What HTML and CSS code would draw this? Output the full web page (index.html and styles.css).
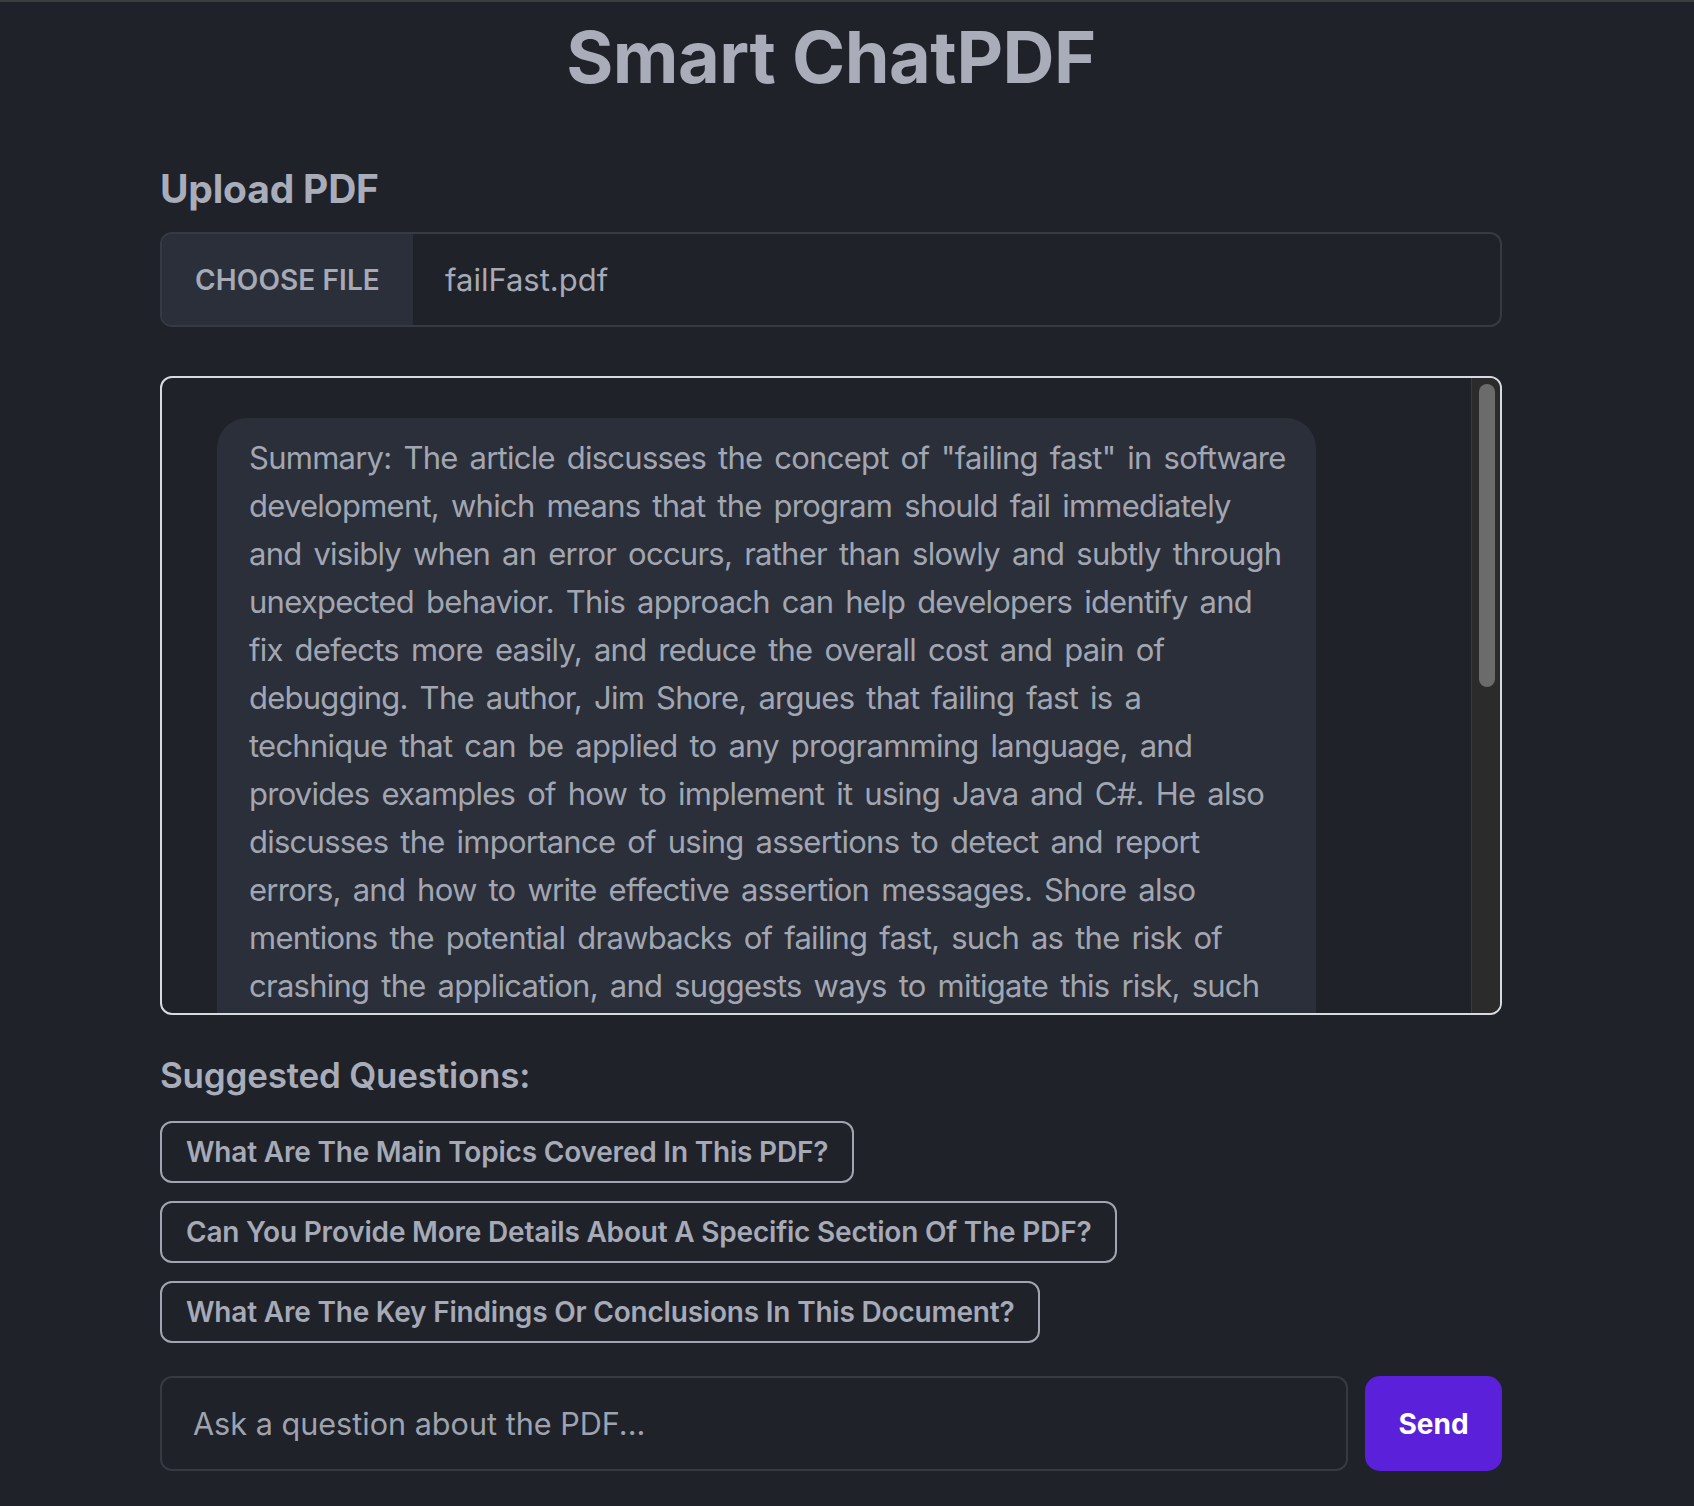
FILE: index.html
```html
<!DOCTYPE html>
<html lang="en">
<head>
<meta charset="utf-8">
<title>Smart ChatPDF</title>
<link rel="stylesheet" href="styles.css">
</head>
<body>
<div class="topbar"></div>
<main class="page">
  <h1 class="title">Smart ChatPDF</h1>

  <section class="upload">
    <h2 class="upload-label">Upload PDF</h2>
    <div class="file-field">
      <button class="file-btn" type="button">CHOOSE FILE</button>
      <span class="file-name">failFast.pdf</span>
    </div>
  </section>

  <section class="chat">
    <div class="chat-scroll">
      <div class="message bot">Summary: The article discusses the concept of "failing fast" in software development, which means that the program should fail immediately and visibly when an error occurs, rather than slowly and subtly through unexpected behavior. This approach can help developers identify and fix defects more easily, and reduce the overall cost and pain of debugging. The author, Jim Shore, argues that failing fast is a technique that can be applied to any programming language, and provides examples of how to implement it using Java and C#. He also discusses the importance of using assertions to detect and report errors, and how to write effective assertion messages. Shore also mentions the potential drawbacks of failing fast, such as the risk of crashing the application, and suggests ways to mitigate this risk, such as using a global exception handler that logs the error and lets the user recover gracefully.</div>
    </div>
    <div class="scrollbar" aria-hidden="true">
      <div class="scrollbar-thumb"></div>
    </div>
  </section>

  <section class="suggestions">
    <h3 class="suggestions-title">Suggested Questions:</h3>
    <div class="suggestion-list">
      <button class="suggestion" type="button">What Are The Main Topics Covered In This PDF?</button>
      <button class="suggestion" type="button">Can You Provide More Details About A Specific Section Of The PDF?</button>
      <button class="suggestion" type="button">What Are The Key Findings Or Conclusions In This Document?</button>
    </div>
  </section>

  <form class="ask">
    <input class="ask-input" type="text" placeholder="Ask a question about the PDF...">
    <button class="send" type="button">Send</button>
  </form>
</main>
</body>
</html>
```

FILE: styles.css
```css
* {
  box-sizing: border-box;
}

html, body {
  margin: 0;
  padding: 0;
  background: #1f2229;
}

body {
  font-family: "Inter", "Noto Sans", sans-serif;
  color: #a6a9b6;
  min-height: 1506px;
}

.topbar {
  height: 2px;
  background: #3c3d40;
}

.page {
  width: 1342px;
  margin-left: 160px;
  display: flex;
  flex-direction: column;
}

.title {
  margin: 19px 0 0;
  font-size: 72px;
  line-height: 72px;
  font-weight: 700;
  letter-spacing: -0.5px;
  text-align: center;
  color: #a9acb9;
}

.upload {
  margin-top: 73px;
}

.upload-label {
  margin: 0;
  font-size: 39px;
  line-height: 46px;
  font-weight: 700;
  letter-spacing: -0.2px;
  color: #a9acb9;
}

.file-field {
  margin-top: 20px;
  height: 95px;
  border: 2px solid #363a43;
  border-radius: 12px;
  display: flex;
  align-items: stretch;
  overflow: hidden;
}

.file-btn {
  width: 251px;
  border: none;
  margin: 0;
  padding: 0;
  background: #2a2f39;
  color: #a6a9b6;
  font-family: inherit;
  font-size: 28px;
  font-weight: 600;
  letter-spacing: 0.1px;
}

.file-name {
  display: flex;
  align-items: center;
  padding-left: 32px;
  font-size: 31px;
  color: #a6a9b6;
}

.chat {
  margin-top: 49px;
  height: 639px;
  border: 2px solid #d9dadf;
  border-radius: 12px;
  display: flex;
  overflow: hidden;
}

.chat-scroll {
  flex: 1;
  padding: 40px 0 40px 55px;
  overflow: hidden;
}

.scrollbar {
  width: 29px;
  flex: none;
  background: #2b2b2b;
  border-left: 1px solid #3b3b3b;
  padding: 6px 5px 0 7px;
}

.scrollbar-thumb {
  height: 303px;
  border-radius: 8px;
  background: #6b6b6b;
}

.message {
  width: 1099px;
  padding: 16px 27px 16px 32px;
  border-radius: 30px;
  background: #2a2f39;
  color: #a2a6b2;
  font-size: 31px;
  line-height: 48px;
  letter-spacing: -0.75px;
  word-spacing: 4px;
}

.suggestions {
  margin-top: 39px;
}

.suggestions-title {
  margin: 0;
  font-size: 35px;
  line-height: 43px;
  font-weight: 600;
  letter-spacing: -0.2px;
  color: #a9acb9;
}

.suggestion-list {
  margin-top: 24px;
  display: flex;
  flex-direction: column;
  align-items: flex-start;
  gap: 18px;
}

.suggestion {
  height: 62px;
  padding: 0 24px;
  border: 2px solid #a2a5b0;
  border-radius: 12px;
  background: transparent;
  color: #a6a9b6;
  font-family: inherit;
  font-size: 28px;
  font-weight: 600;
  letter-spacing: -0.2px;
}

.ask {
  margin: 33px 0 0;
  display: flex;
  gap: 17px;
}

.ask-input {
  flex: 1;
  height: 95px;
  padding: 0 31px;
  border: 2px solid #363a43;
  border-radius: 12px;
  background: transparent;
  color: #a6a9b6;
  font-family: inherit;
  font-size: 30.6px;
  outline: none;
}

.ask-input::placeholder {
  color: #9fa3af;
}

.send {
  width: 137px;
  height: 95px;
  border: none;
  border-radius: 15px;
  background: #5b20da;
  color: #ffffff;
  font-family: inherit;
  font-size: 28px;
  font-weight: 700;
}
```
